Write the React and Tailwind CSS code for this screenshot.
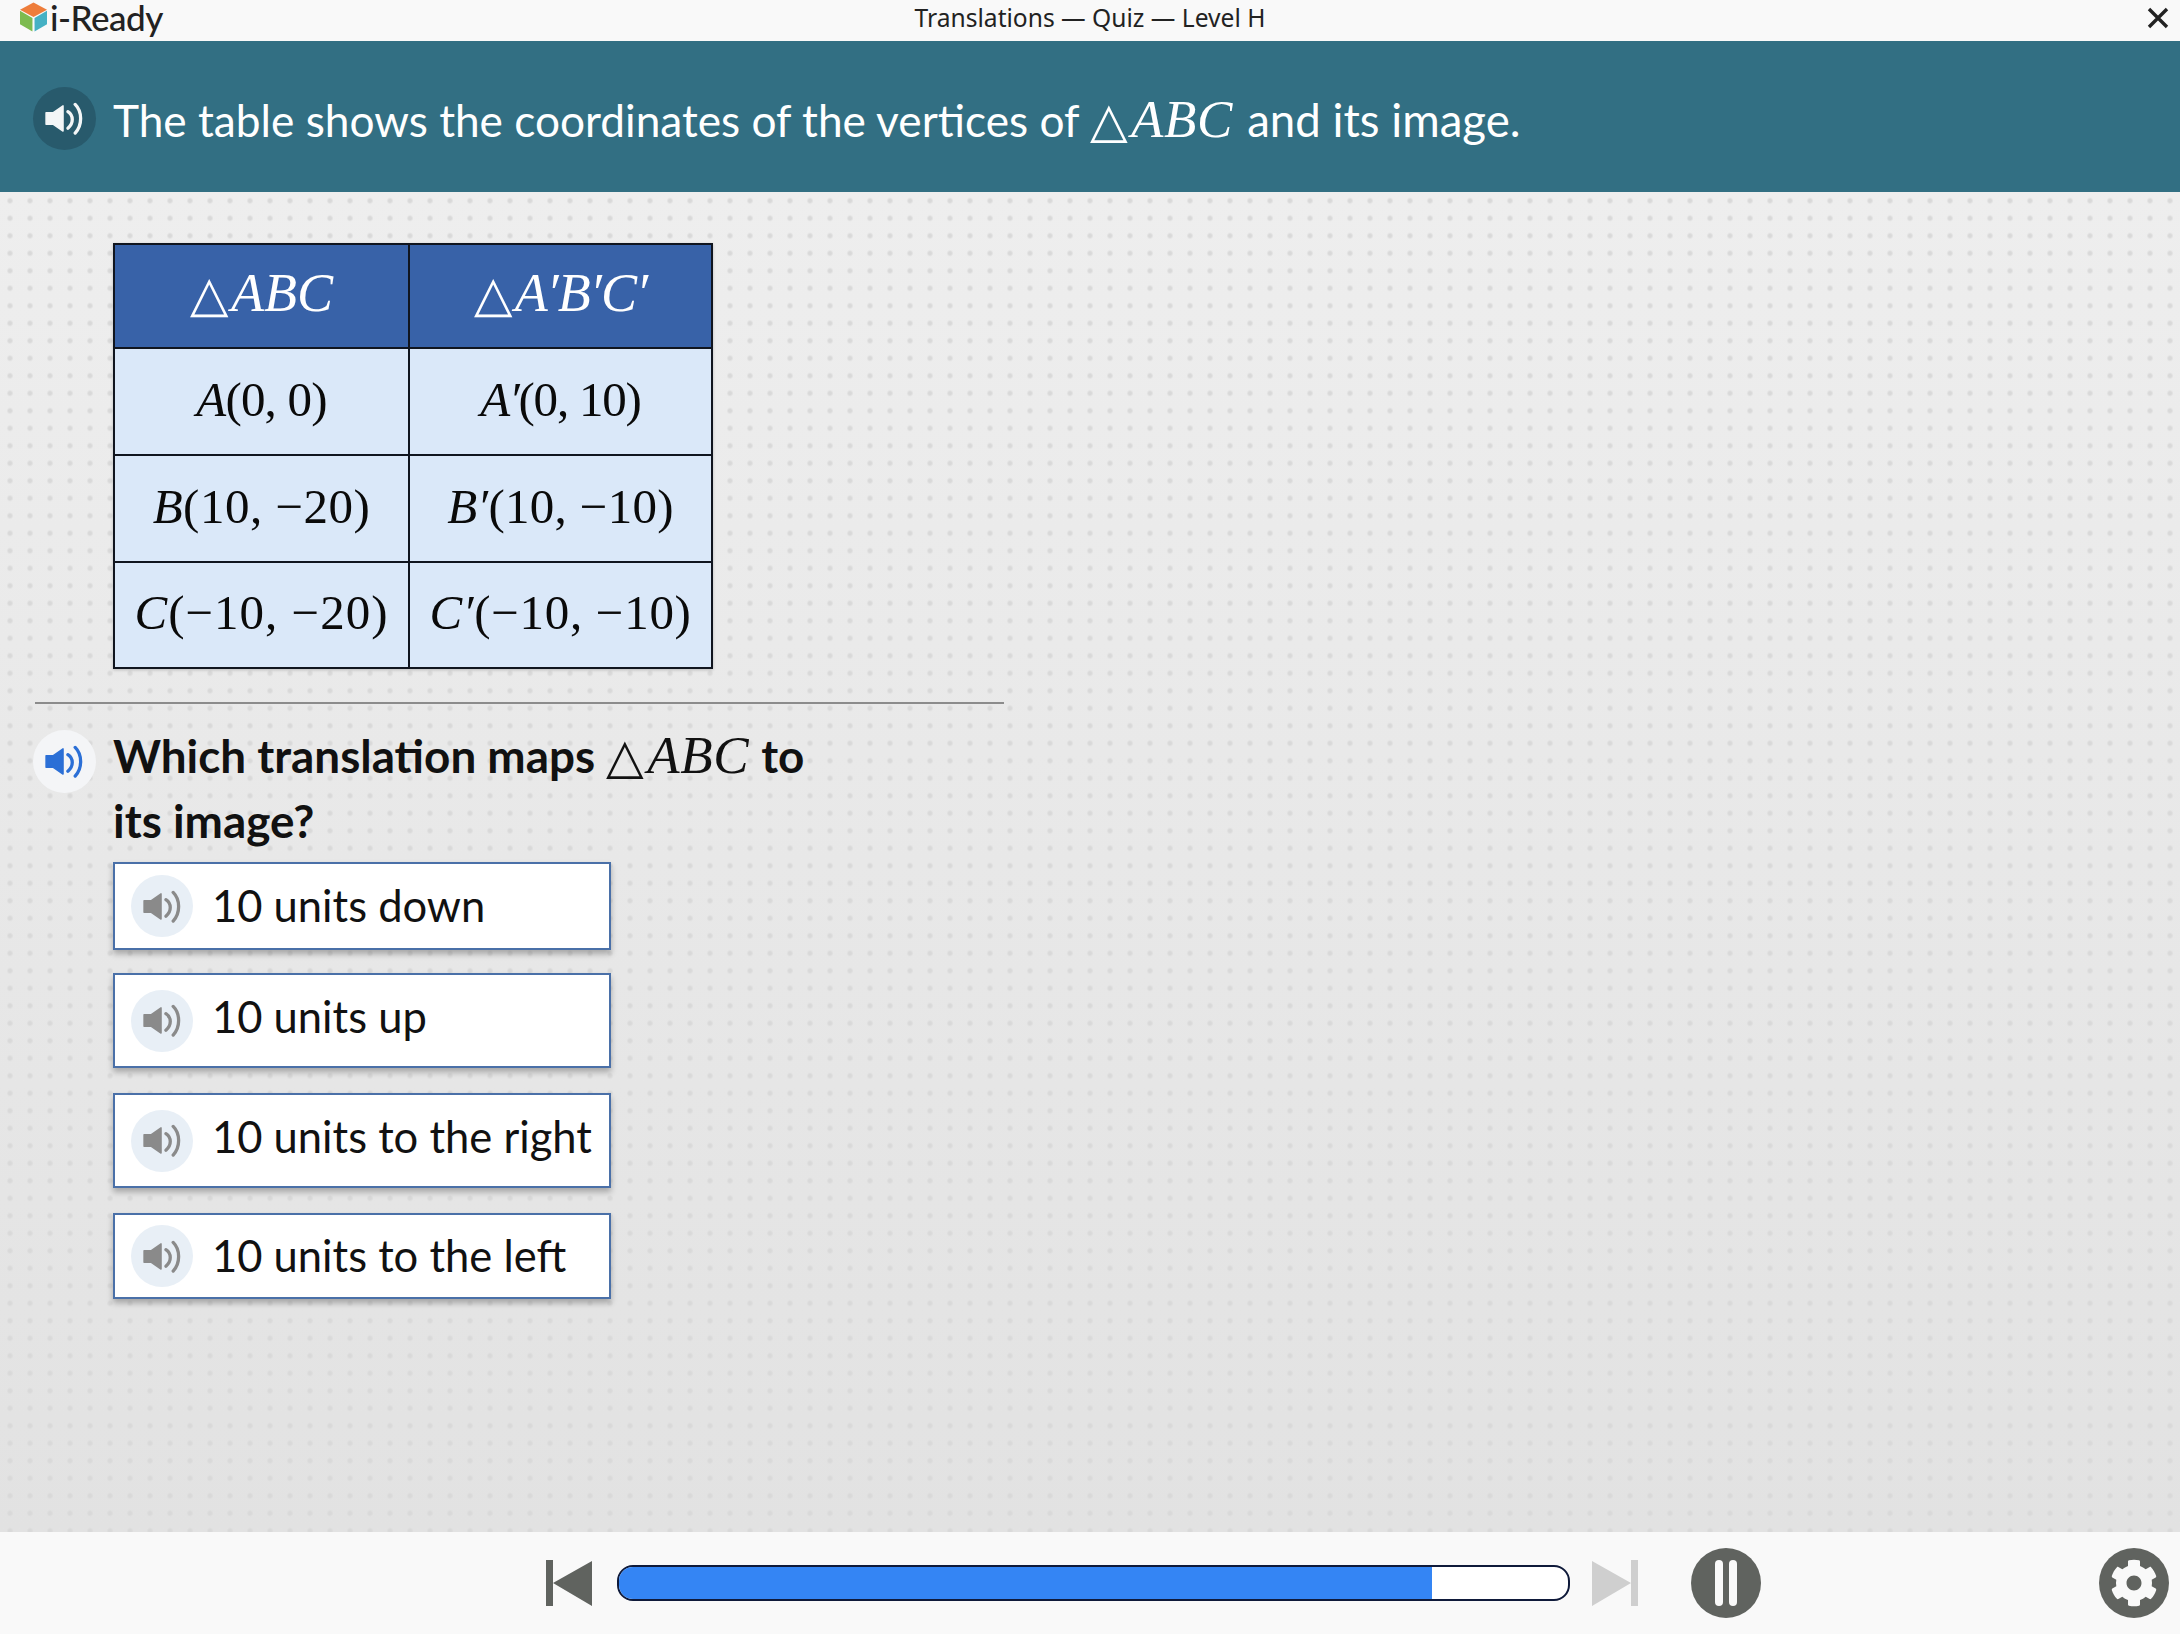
import React from "react";
import { FaCog } from "react-icons/fa";

const Speaker = ({ color, className }) => (
  <svg viewBox="0 0 40 34" className={className} fill="none">
    <path d="M1 11 H8.5 L18.5 4 V30 L8.5 23 H1 Z" fill={color} stroke={color} strokeWidth="1.5" strokeLinejoin="round" />
    <path d="M23.5 10 C29.5 14 29.5 22 23.5 27" stroke={color} strokeWidth="3.4" strokeLinecap="round" />
    <path d="M31 2.5 C38.5 10 38.5 24 31 32" stroke={color} strokeWidth="3.4" strokeLinecap="round" />
  </svg>
);

const M = ({ children, className = "" }) => (
  <span className={`font-['Liberation_Serif',serif] font-normal leading-[0] ${className}`}>{children}</span>
);
const I = ({ children }) => <i>{children}</i>;

const Tri = ({ abc = "ABC", className = "text-[53px]", track = "tracking-[0.6px]" }) => (
  <M className={className}>
    <span className="mr-[3px] font-['DejaVu_Sans',sans-serif] text-[0.92em] font-extralight not-italic">△</span>
    <i className={track}>{abc}</i>
  </M>
);

const Cell = ({ children, head, right, bottom, track = "" }) => (
  <div
    className={`flex items-center justify-center whitespace-nowrap border-[#10151f] pb-[5px] ${right ? "border-r-2" : ""} ${bottom ? "border-b-2" : ""} ${
      head ? "bg-[#3862a8] text-white" : "bg-[#dae8f9] text-[#0a0a0a]"
    }`}
  >
    {head ? children : <M className={`text-[49px] leading-none ${track}`}>{children}</M>}
  </div>
);

const Option = ({ text, h, mt, shift = "" }) => (
  <div className={`flex w-[498px] items-center border-2 border-[#4a70a8] bg-white pl-[16px] shadow-[0_4px_6px_rgba(0,0,0,0.28)] ${h} ${mt}`}>
    <div className="flex h-[62px] w-[62px] shrink-0 items-center justify-center rounded-full bg-[#e8eff6]">
      <Speaker color="#8a8a8a" className="h-[33px] w-[39px]" />
    </div>
    <span className={`ml-[19px] whitespace-nowrap font-['Lato',sans-serif] text-[43.5px] leading-none text-[#111] ${shift}`}>{text}</span>
  </div>
);

export default function App() {
  return (
    <div className="flex h-[1634px] w-[2180px] flex-col overflow-hidden font-['Lato',sans-serif]">
      <header className="relative flex h-[41px] shrink-0 items-center justify-center bg-[#f9f9f9] pb-[5px]">
        <div className="absolute left-[20px] top-0 flex items-center">
          <svg viewBox="0 0 26 28" className="h-[30px] w-[27px]">
            <path d="M13 0 L26 7 L13 14 L0 7 Z" fill="#ee7d3b" />
            <path d="M0 8 L12 15 L12 28 L0 21 Z" fill="#7dbb4f" />
            <path d="M14 15 L26 8 L26 21 L14 28 Z" fill="#45b1c4" />
          </svg>
          <span className="ml-[3px] text-[35px] leading-[34px] font-medium tracking-[-0.5px] text-[#222]">i-Ready</span>
        </div>
        <span className="font-['Noto_Sans',sans-serif] text-[24.6px] leading-none text-[#222]">Translations — Quiz — Level H</span>
        <svg viewBox="0 0 22 22" className="absolute left-[2147px] top-[7px] h-[22px] w-[22px]">
          <path d="M2 2 L20 20 M20 2 L2 20" stroke="#222" strokeWidth="3.4" />
        </svg>
      </header>

      <section className="flex h-[151px] shrink-0 items-center bg-[#326f83] pl-[33px]">
        <div className="mt-[3px] flex h-[63px] w-[63px] items-center justify-center rounded-full bg-[#285a6c]">
          <Speaker color="#f3f6f7" className="h-[33px] w-[39px]" />
        </div>
        <p className="ml-[17px] mt-[6px] whitespace-nowrap text-[44.2px] leading-none font-normal text-white">
          The table shows the coordinates of the vertices of <Tri /> <span className="ml-[3px] text-[45.6px]">and its image.</span>
        </p>
      </section>

      <main className="flex-1 bg-[radial-gradient(circle,#d9d9d9_1.5px,transparent_3.5px),linear-gradient(180deg,#eeeeee,#e2e2e2)] bg-[length:20px_17.5px,100%_100%]">
        <div className="ml-[113px] mt-[51px] grid h-[426px] w-[600px] grid-cols-[295px_1fr] grid-rows-[104px_107px_107px_1fr] border-2 border-[#10151f] shadow-[0_1px_3px_rgba(0,0,0,0.2)]">
          <Cell head right bottom><Tri className="text-[54px]" track="tracking-normal" /></Cell>
          <Cell head bottom><Tri className="text-[54px]" track="tracking-[-0.8px]" abc="A′B′C′" /></Cell>
          <Cell right bottom track="tracking-[-0.8px]"><I>A</I>(0, 0)</Cell>
          <Cell bottom track="tracking-[-1.2px]"><I>A′</I>(0, 10)</Cell>
          <Cell right bottom track="tracking-[0.5px]"><I>B</I>(10, −20)</Cell>
          <Cell bottom track="tracking-[0.3px]"><I>B′</I>(10, −10)</Cell>
          <Cell right track="tracking-[1px]"><I>C</I>(−10, −20)</Cell>
          <Cell track="tracking-[0.7px]"><I>C′</I>(−10, −10)</Cell>
        </div>

        <div className="ml-[35px] mt-[33px] h-[2px] w-[969px] bg-[#8c8c8c]" />

        <div className="ml-[33px] mt-[26px] flex">
          <div className="flex h-[63px] w-[63px] shrink-0 items-center justify-center rounded-full bg-[#f4f5f7]">
            <Speaker color="#2b6fd6" className="h-[33px] w-[39px]" />
          </div>
          <p className="-mt-[7px] ml-[17px] w-[760px] text-[45.8px] leading-[65px] font-bold text-[#111]">
            Which translation maps <Tri /> <span className="ml-[1px]">to</span>
            <br />
            its image?
          </p>
        </div>

        <div className="ml-[113px] mt-[9px]">
          <Option text="10 units down" h="h-[88px]" mt="mt-0" />
          <Option text="10 units up" h="h-[95px]" mt="mt-[23px]" shift="mb-[8px]" />
          <Option text="10 units to the right" h="h-[95px]" mt="mt-[25px]" shift="mb-[8px]" />
          <Option text="10 units to the left" h="h-[86px]" mt="mt-[25px]" />
        </div>
      </main>

      <footer className="relative flex h-[102px] shrink-0 items-center bg-[#f9f9f9] pl-[546px]">
        <svg viewBox="0 0 46 46" className="h-[46px] w-[46px] shrink-0">
          <path d="M0 0 H7 V46 H0 Z M7 23 L46 1 V46 Z" fill="#60635f" />
        </svg>
        <div className="ml-[25px] h-[36px] w-[953px] shrink-0 overflow-hidden rounded-[16px] border-2 border-[#0f1a3a] bg-white">
          <div className="h-full w-[813px] bg-[#3485f4]" />
        </div>
        <svg viewBox="0 0 46 46" className="ml-[22px] h-[46px] w-[46px] shrink-0">
          <path d="M0 1 L39 23 L0 46 Z M39 0 H46 V46 H39 Z" fill="#cfcfcf" />
        </svg>
        <div className="ml-[53px] flex h-[70px] w-[70px] shrink-0 items-center justify-center gap-[6px] rounded-full bg-[#60635f]">
          <span className="h-[46px] w-[8px] rounded-full bg-[#f9f9f9]" />
          <span className="h-[46px] w-[8px] rounded-full bg-[#f9f9f9]" />
        </div>
        <div className="ml-[338px] flex h-[70px] w-[70px] shrink-0 items-center justify-center rounded-full bg-[#60635f]">
          <FaCog className="h-[48px] w-[48px] text-[#f9f9f9]" />
        </div>
      </footer>
    </div>
  );
}
